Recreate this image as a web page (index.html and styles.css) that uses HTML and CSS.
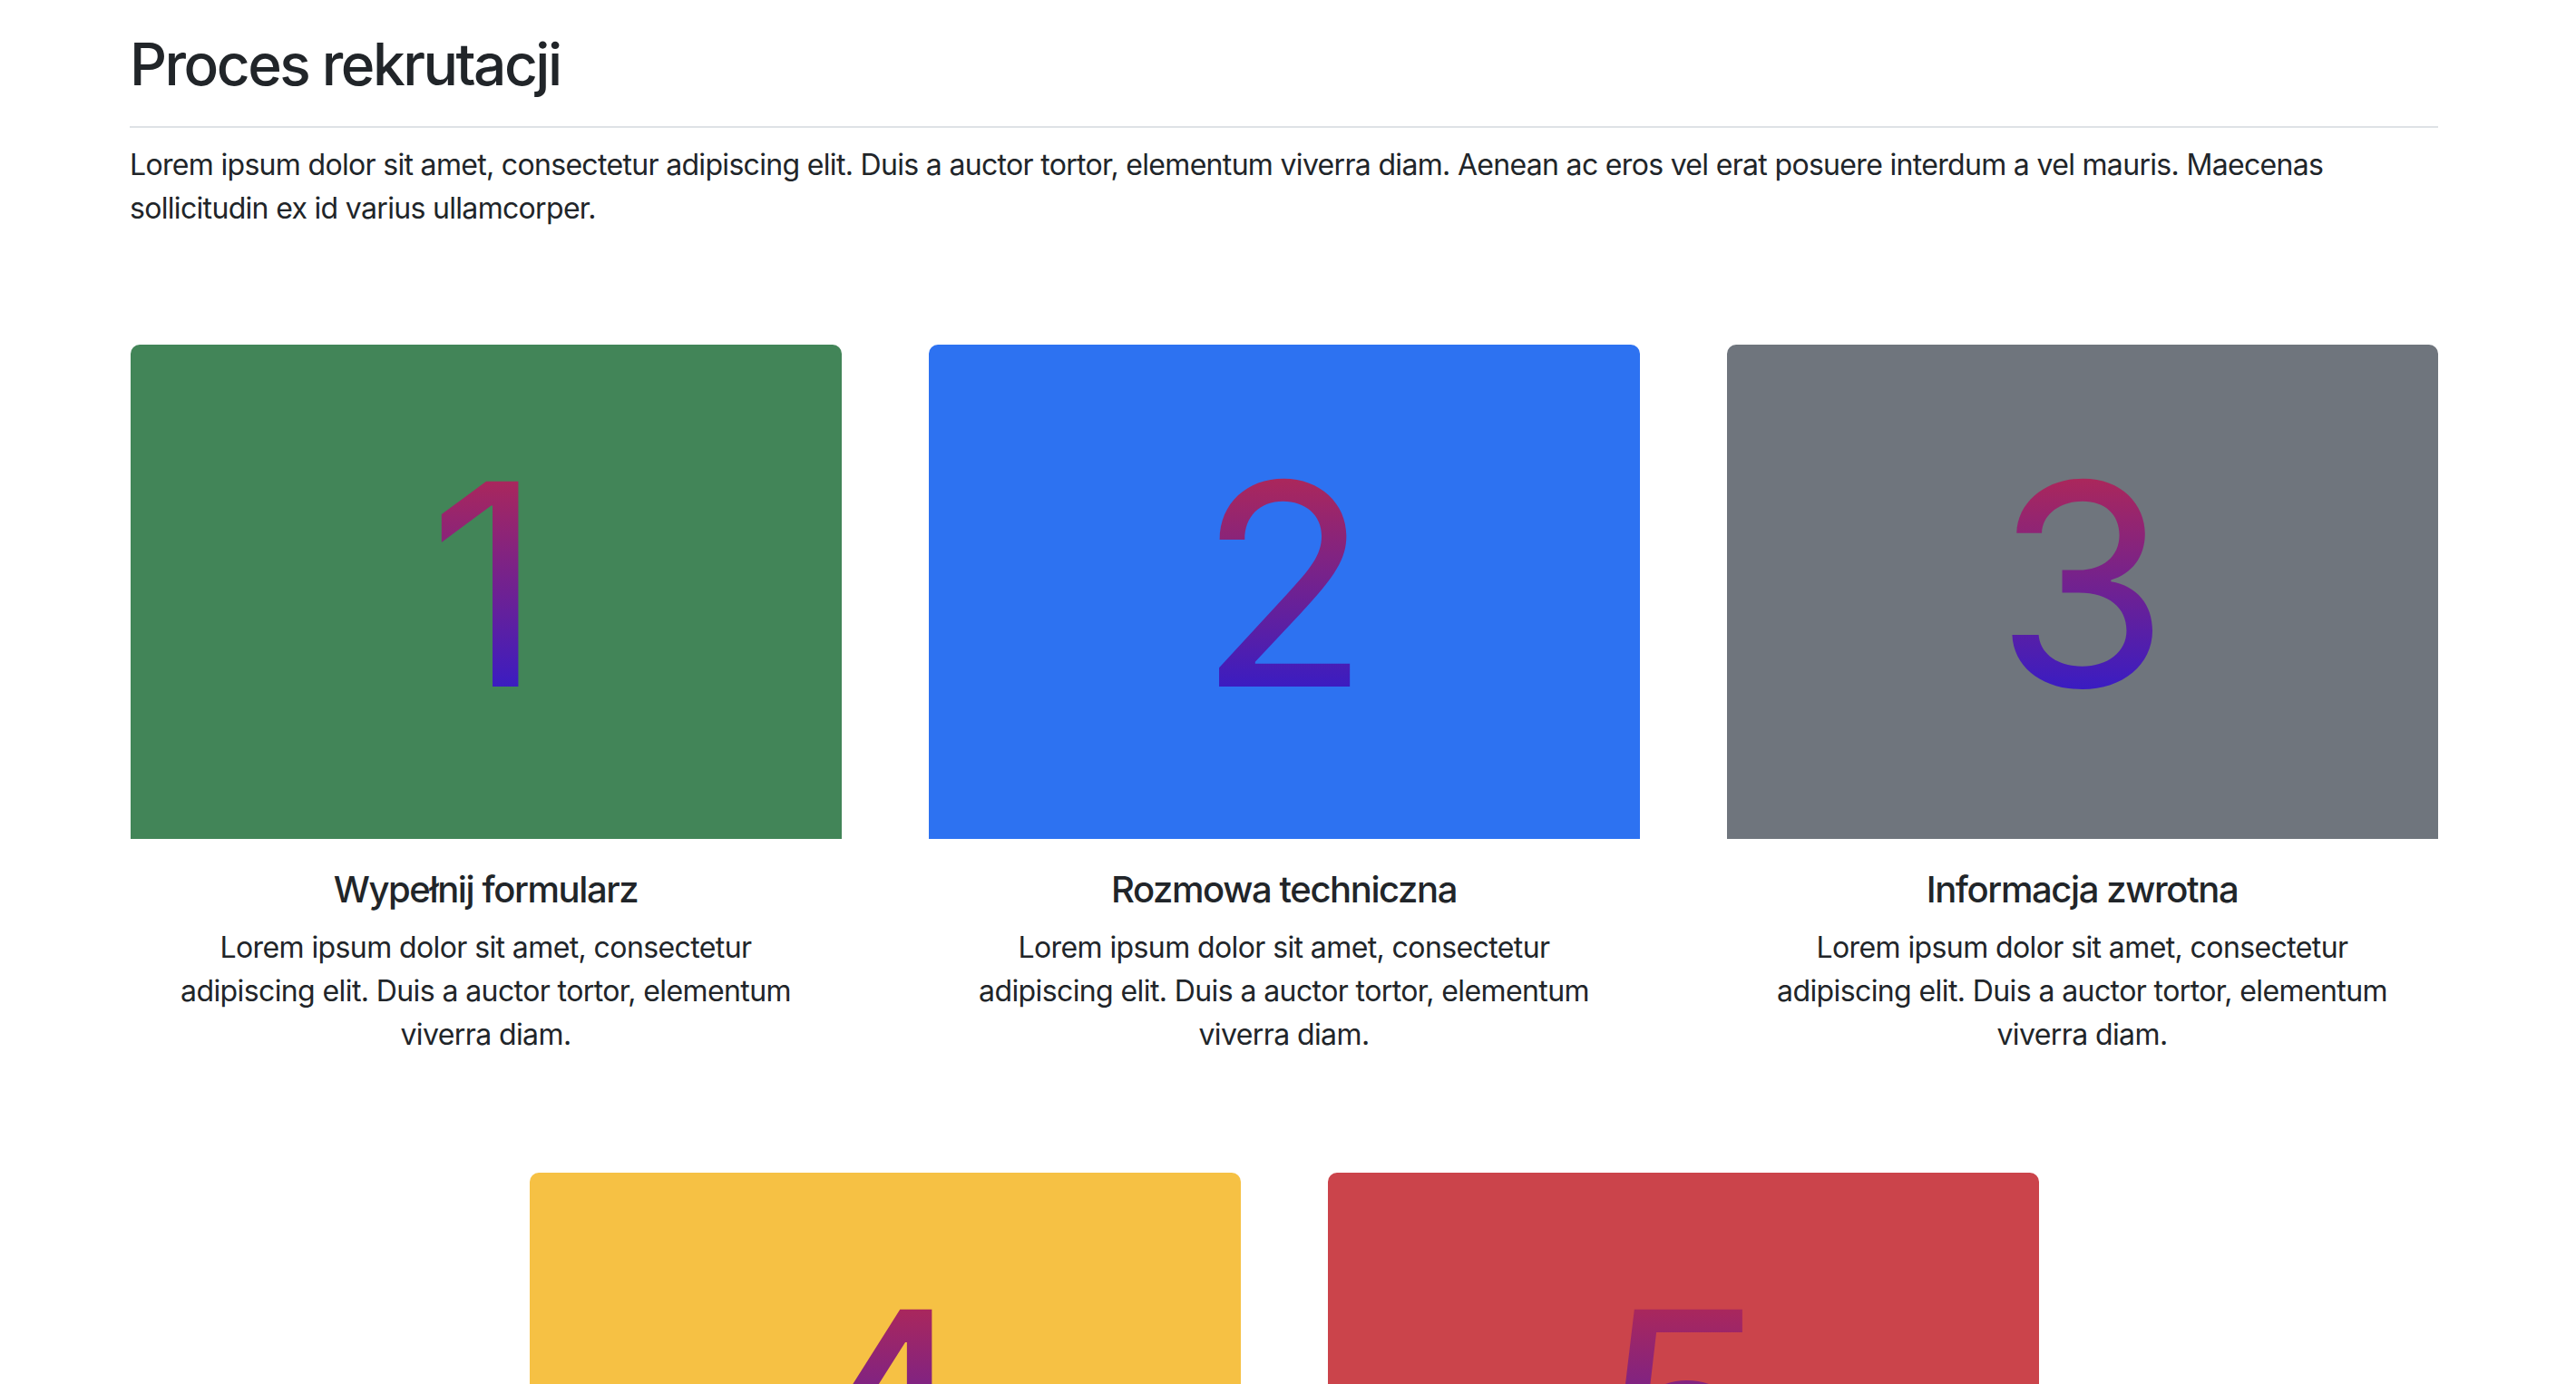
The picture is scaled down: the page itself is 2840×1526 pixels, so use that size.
FILE: index.html
```html
<!DOCTYPE html>
<html lang="pl">
<head>
<meta charset="utf-8">
<title>Proces rekrutacji</title>
<link rel="stylesheet" href="styles.css">
</head>
<body>
<main class="page">
  <h2 class="page-title">Proces rekrutacji</h2>
  <p class="intro">Lorem ipsum dolor sit amet, consectetur adipiscing elit. Duis a auctor tortor, elementum viverra diam. Aenean ac eros vel erat posuere interdum a vel mauris. Maecenas sollicitudin ex id varius ullamcorper.</p>
  <section class="steps">
    <article class="step">
      <div class="step-visual green"><span class="step-num">1</span></div>
      <div class="step-body">
        <h5 class="step-title">Wypełnij formularz</h5>
        <p class="step-text">Lorem ipsum dolor sit amet, consectetur adipiscing elit. Duis a auctor tortor, elementum viverra diam.</p>
      </div>
    </article>
    <article class="step">
      <div class="step-visual blue"><span class="step-num">2</span></div>
      <div class="step-body">
        <h5 class="step-title">Rozmowa techniczna</h5>
        <p class="step-text">Lorem ipsum dolor sit amet, consectetur adipiscing elit. Duis a auctor tortor, elementum viverra diam.</p>
      </div>
    </article>
    <article class="step">
      <div class="step-visual gray"><span class="step-num">3</span></div>
      <div class="step-body">
        <h5 class="step-title">Informacja zwrotna</h5>
        <p class="step-text">Lorem ipsum dolor sit amet, consectetur adipiscing elit. Duis a auctor tortor, elementum viverra diam.</p>
      </div>
    </article>
    <article class="step">
      <div class="step-visual yellow"><span class="step-num">4</span></div>
      <div class="step-body">
        <h5 class="step-title">Oferta współpracy</h5>
        <p class="step-text">Lorem ipsum dolor sit amet, consectetur adipiscing elit. Duis a auctor tortor, elementum viverra diam.</p>
      </div>
    </article>
    <article class="step">
      <div class="step-visual red"><span class="step-num">5</span></div>
      <div class="step-body">
        <h5 class="step-title">Pierwszy dzień pracy</h5>
        <p class="step-text">Lorem ipsum dolor sit amet, consectetur adipiscing elit. Duis a auctor tortor, elementum viverra diam.</p>
      </div>
    </article>
  </section>
</main>
</body>
</html>
```

FILE: styles.css
```css
html, body {
  margin: 0;
  padding: 0;
  background: #ffffff;
}

body {
  font-family: Inter, "Liberation Sans", sans-serif;
  font-size: 32px;
  line-height: 48px;
  letter-spacing: -0.6px;
  color: #212529;
}

.page {
  width: 2545px;
  margin-left: 143px;
  padding-top: 32px;
}

.page-title {
  margin: 0;
  font-size: 64px;
  font-weight: 500;
  line-height: 77px;
  letter-spacing: -2.5px;
  padding-bottom: 30px;
  border-bottom: 2px solid #dee2e6;
}

.intro {
  margin: 17px 0 0;
  letter-spacing: -0.68px;
}

.steps {
  display: flex;
  flex-wrap: wrap;
  justify-content: center;
  column-gap: 96px;
  row-gap: 96px;
  margin-top: 126px;
}

.step {
  width: 784px;
}

.step-visual {
  box-sizing: border-box;
  height: 545px;
  padding-bottom: 17px;
  border-radius: 10px 10px 0 0;
  display: flex;
  align-items: center;
  justify-content: center;
}

.green { background: #428558; }
.blue { background: #2d72f1; }
.gray { background: #6f757d; }
.yellow { background: #f6c144; }
.red { background: #cb444b; }

.step-num {
  display: inline-block;
  font-size: 311px;
  line-height: 311px;
  font-weight: 400;
  letter-spacing: 0;
  background: linear-gradient(to bottom, #aa275c 0%, #aa275c 13%, #3a1cc2 87%, #3a1cc2 100%);
  -webkit-background-clip: text;
  background-clip: text;
  color: transparent;
}

.step-body {
  padding: 32px;
  text-align: center;
}

.step-title {
  margin: 0 0 16px;
  font-size: 40px;
  font-weight: 500;
  line-height: 48px;
  letter-spacing: -1.4px;
}

.step-text {
  margin: 0;
}
```
